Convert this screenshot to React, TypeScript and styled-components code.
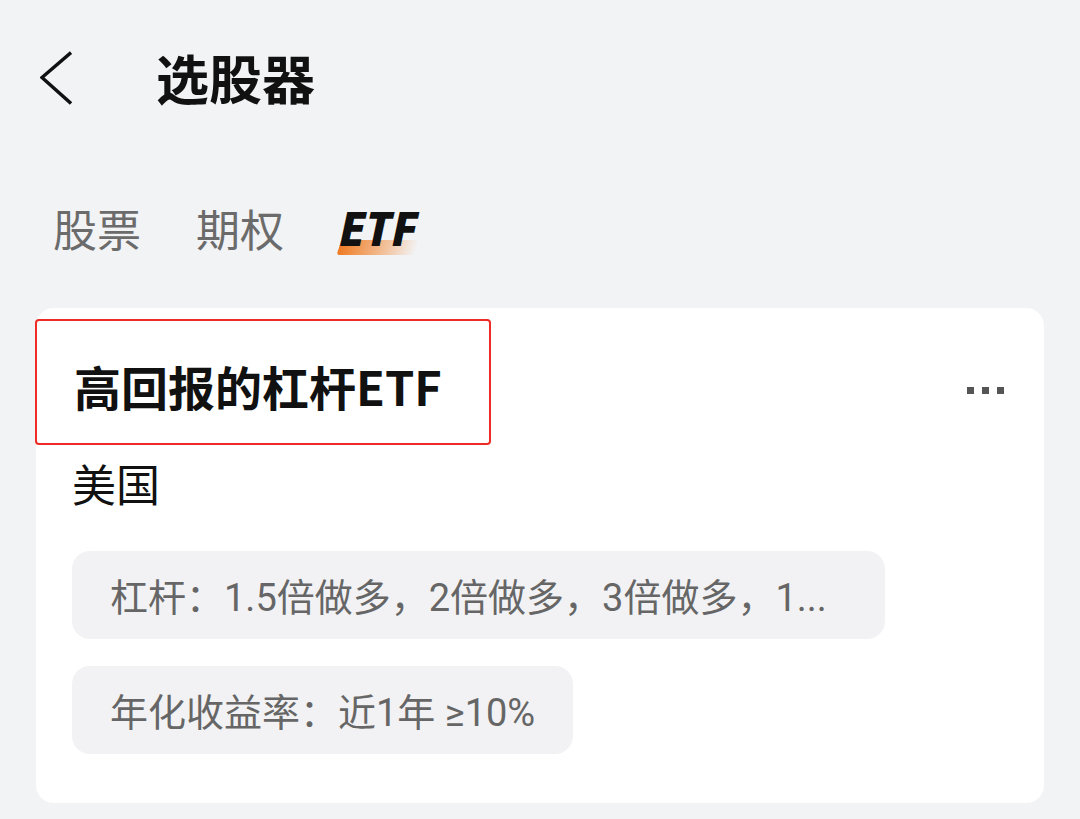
import React from "react";
import styled, { createGlobalStyle } from "styled-components";

const GlobalStyle = createGlobalStyle`
  html, body {
    margin: 0;
    padding: 0;
    background: #f2f3f5;
  }
  body {
    font-family: "Noto Sans CJK SC", "Noto Sans", sans-serif;
    color: #111;
  }
  * { box-sizing: border-box; }
`;

const Page = styled.div`
  width: 1080px;
  height: 819px;
  padding: 0 36px;
  background: #f2f3f5;
  overflow: hidden;
`;

const Header = styled.header`
  height: 156px;
  display: flex;
  align-items: center;
  padding-left: 4px;
  gap: 84px;
`;

const BackButton = styled.button`
  border: 0;
  background: none;
  padding: 0;
  width: 32px;
  height: 54px;
  display: flex;
  align-items: center;
  justify-content: center;
  color: #111;
`;

const PageTitle = styled.h1`
  margin: 0;
  font-size: 53px;
  font-weight: 700;
  line-height: 1.2;
  color: #111;
`;

const Tabs = styled.nav`
  height: 152px;
  padding: 0 0 8px 17px;
  display: flex;
  align-items: center;
  gap: 55px;
`;

const Tab = styled.span<{ $active?: boolean }>`
  position: relative;
  font-size: ${(p) => (p.$active ? "48px" : "44px")};
  font-weight: ${(p) => (p.$active ? 800 : 400)};
  font-style: ${(p) => (p.$active ? "italic" : "normal")};
  font-family: ${(p) =>
    p.$active ? '"Noto Sans", "Noto Sans CJK SC", sans-serif' : '"Noto Sans CJK SC", sans-serif'};
  color: ${(p) => (p.$active ? "#111" : "#6b6b6b")};
  line-height: 1.2;
  z-index: 0;
  ${(p) =>
    p.$active &&
    `
    &::before {
      content: "";
      position: absolute;
      left: 0px;
      bottom: 2px;
      width: 78px;
      height: 15px;
      border-radius: 3px;
      transform: skewX(-18deg);
      background: linear-gradient(90deg, #ef7a22 0%, rgba(242, 140, 60, 0.6) 50%, rgba(245, 160, 90, 0) 100%);
      z-index: -1;
    }
  `}
`;

const Card = styled.section`
  background: #fff;
  border-radius: 18px;
  padding: 11px 40px 49px 36px;
  display: flex;
  flex-direction: column;
`;

const TitleRow = styled.div`
  display: flex;
  justify-content: space-between;
  align-items: flex-start;
`;

const TitleBox = styled.div`
  margin-left: -37px;
  width: 456px;
  height: 126px;
  border: 2px solid #ee2b24;
  border-radius: 4px;
  padding: 9px 0 0 37px;
  display: flex;
  align-items: center;
`;

const CardTitle = styled.h2`
  margin: 0;
  font-size: 47px;
  font-weight: 700;
  line-height: 1.2;
  color: #111;
`;

const MoreDots = styled.div`
  display: flex;
  gap: 8px;
  margin-top: 68px;
`;

const Dot = styled.span`
  width: 7px;
  height: 7px;
  background: #555;
`;

const Market = styled.div`
  margin-top: 12px;
  font-size: 44px;
  line-height: 1.2;
  color: #111;
`;

const ChipList = styled.div`
  margin-top: 41px;
  display: flex;
  flex-direction: column;
  align-items: flex-start;
  gap: 27px;
`;

const Chip = styled.div<{ $maxed?: boolean }>`
  height: 88px;
  padding: 0 38px;
  display: inline-flex;
  align-items: center;
  width: ${(p) => (p.$maxed ? "813px" : "auto")};
  background: #f2f2f4;
  border-radius: 18px;
  font-family: Roboto, "Noto Sans CJK SC", sans-serif;
  font-size: 38px;
  color: #666;
  white-space: nowrap;
  overflow: hidden;
`;

export default function App() {
  return (
    <>
      <GlobalStyle />
      <Page>
        <Header>
          <BackButton aria-label="返回">
            <svg width="32" height="54" viewBox="0 0 32 54" fill="none">
              <polyline
                points="31,1.5 2,26.5 31,52.5"
                stroke="#111"
                strokeWidth="3.4"
                strokeLinecap="butt"
                strokeLinejoin="miter"
              />
            </svg>
          </BackButton>
          <PageTitle>选股器</PageTitle>
        </Header>
        <Tabs>
          <Tab>股票</Tab>
          <Tab>期权</Tab>
          <Tab $active>ETF</Tab>
        </Tabs>
        <Card>
          <TitleRow>
            <TitleBox>
              <CardTitle>高回报的杠杆ETF</CardTitle>
            </TitleBox>
            <MoreDots>
              <Dot />
              <Dot />
              <Dot />
            </MoreDots>
          </TitleRow>
          <Market>美国</Market>
          <ChipList>
            <Chip $maxed>杠杆：1.5倍做多，2倍做多，3倍做多，1...</Chip>
            <Chip>年化收益率：近1年 ≥10%</Chip>
          </ChipList>
        </Card>
      </Page>
    </>
  );
}
